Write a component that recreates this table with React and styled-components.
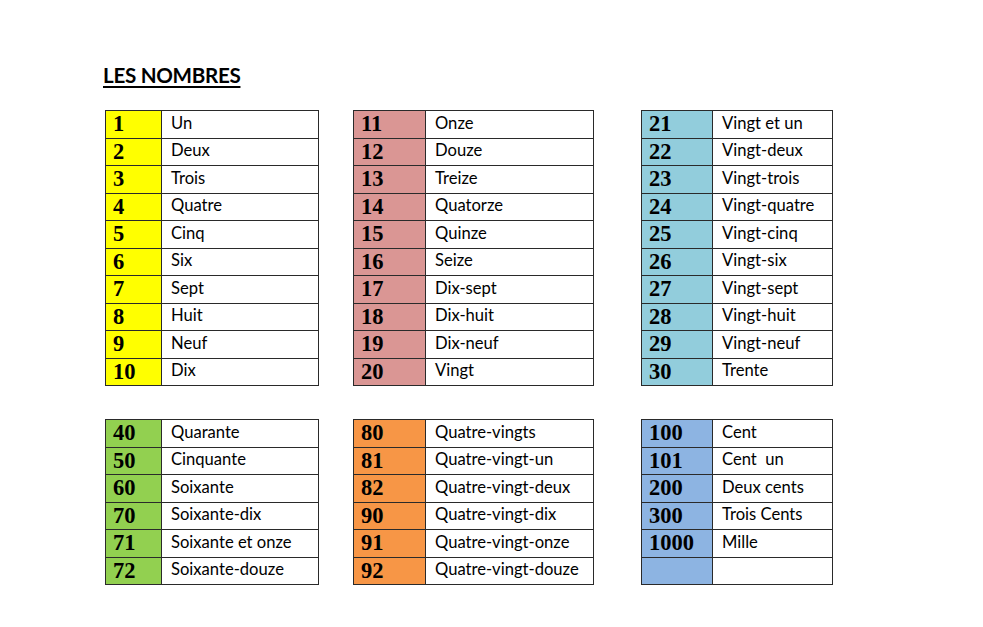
import React from "react";
import styled, { createGlobalStyle } from "styled-components";

const GlobalStyle = createGlobalStyle`
  html, body {
    margin: 0;
    padding: 0;
    background: #fff;
  }
  body {
    width: 983px;
    height: 627px;
    overflow: hidden;
    font-family: "Lato", "Liberation Sans", sans-serif;
    color: #000;
  }
`;

const groups = [
  {
    color: "#ffff00",
    numWidth: 56,
    textWidth: 157,
    rows: [
      ["1", "Un"], ["2", "Deux"], ["3", "Trois"], ["4", "Quatre"], ["5", "Cinq"],
      ["6", "Six"], ["7", "Sept"], ["8", "Huit"], ["9", "Neuf"], ["10", "Dix"],
    ],
  },
  {
    color: "#da9694",
    numWidth: 72,
    textWidth: 168,
    rows: [
      ["11", "Onze"], ["12", "Douze"], ["13", "Treize"], ["14", "Quatorze"], ["15", "Quinze"],
      ["16", "Seize"], ["17", "Dix-sept"], ["18", "Dix-huit"], ["19", "Dix-neuf"], ["20", "Vingt"],
    ],
  },
  {
    color: "#92cddc",
    numWidth: 71,
    textWidth: 120,
    rows: [
      ["21", "Vingt et un"], ["22", "Vingt-deux"], ["23", "Vingt-trois"], ["24", "Vingt-quatre"],
      ["25", "Vingt-cinq"], ["26", "Vingt-six"], ["27", "Vingt-sept"], ["28", "Vingt-huit"],
      ["29", "Vingt-neuf"], ["30", "Trente"],
    ],
  },
  {
    color: "#92d050",
    numWidth: 56,
    textWidth: 157,
    rows: [
      ["40", "Quarante"], ["50", "Cinquante"], ["60", "Soixante"],
      ["70", "Soixante-dix"], ["71", "Soixante et onze"], ["72", "Soixante-douze"],
    ],
  },
  {
    color: "#f79646",
    numWidth: 72,
    textWidth: 168,
    rows: [
      ["80", "Quatre-vingts"], ["81", "Quatre-vingt-un"], ["82", "Quatre-vingt-deux"],
      ["90", "Quatre-vingt-dix"], ["91", "Quatre-vingt-onze"], ["92", "Quatre-vingt-douze"],
    ],
  },
  {
    color: "#8db4e2",
    numWidth: 71,
    textWidth: 120,
    rows: [
      ["100", "Cent"], ["101", "Cent\u00a0 un"], ["200", "Deux cents"],
      ["300", "Trois Cents"], ["1000", "Mille"], ["", ""],
    ],
  },
];

const Page = styled.div`
  padding: 63px 0 0 103px;
`;

const Title = styled.h1`
  margin: 0 0 23px 0;
  font-family: "Lato", "Liberation Sans", sans-serif;
  font-size: 20.6px;
  font-weight: 700;
  line-height: 24px;
  text-decoration: underline;
  text-decoration-thickness: 2px;
  text-underline-offset: 3px;
  letter-spacing: -0.3px;
`;

const Grid = styled.div`
  display: grid;
  grid-template-columns: 248px 288px 200px;
  row-gap: 33px;
  padding-left: 2px;
`;

const Table = styled.table`
  border-collapse: collapse;
  table-layout: fixed;
  width: ${(p) => p.$num + p.$text}px;
`;

const Row = styled.tr`
  height: 27.5px;
`;

const NumCell = styled.td`
  width: ${(p) => p.$w}px;
  background: ${(p) => p.$bg};
  border: 1px solid #2a2a2a;
  padding: 0 0 0 7px;
  font-family: "Liberation Serif", "DejaVu Serif", serif;
  font-weight: 700;
  font-size: 22.5px;
  line-height: 26px;
  vertical-align: middle;
  box-sizing: border-box;
`;

const TextCell = styled.td`
  border: 1px solid #2a2a2a;
  padding: 0 0 3px 9px;
  font-size: 16.6px;
  line-height: 20px;
  white-space: nowrap;
  vertical-align: middle;
`;

const NumberTable = ({ group }) => (
  <Table $num={group.numWidth} $text={group.textWidth}>
    <colgroup>
      <col style={{ width: group.numWidth }} />
      <col style={{ width: group.textWidth }} />
    </colgroup>
    <tbody>
      {group.rows.map(([n, word], i) => (
        <Row key={i}>
          <NumCell $bg={group.color} $w={group.numWidth}>{n}</NumCell>
          <TextCell>{word}</TextCell>
        </Row>
      ))}
    </tbody>
  </Table>
);

export default function App() {
  return (
    <>
      <GlobalStyle />
      <Page>
        <Title>LES NOMBRES</Title>
        <Grid>
          {groups.map((g, i) => (
            <NumberTable key={i} group={g} />
          ))}
        </Grid>
      </Page>
    </>
  );
}
